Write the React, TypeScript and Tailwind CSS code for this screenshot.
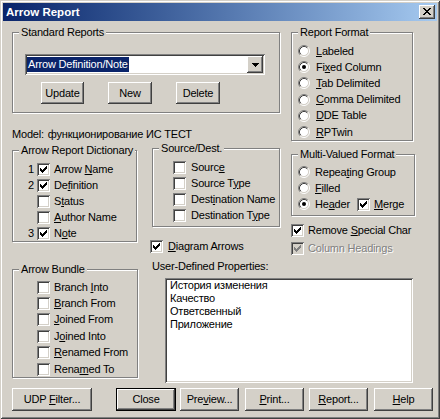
import type { ReactNode } from "react";

// win2k-ish bevels
const RAISED = "shadow-[inset_-1px_-1px_0_#404040,inset_1px_1px_0_#ffffff,inset_-2px_-2px_0_#808080]";
const SUNKEN = "shadow-[inset_1px_1px_0_#808080,inset_-1px_-1px_0_#ffffff,inset_2px_2px_0_#404040,inset_-2px_-2px_0_#d4d0c8]";

// "Fi&xed" -> Fi<u>x</u>ed
function Mn({ t }: { t: string }) {
  const i = t.indexOf("&");
  if (i < 0) return <>{t}</>;
  return (
    <>
      {t.slice(0, i)}
      <span className="underline underline-offset-[1px]">{t[i + 1]}</span>
      {t.slice(i + 2)}
    </>
  );
}

function Group({ title, className, children }: { title: string; className: string; children?: ReactNode }) {
  return (
    <div className={`relative border border-[#808080] shadow-[inset_1px_1px_0_#ffffff,1px_1px_0_#ffffff] ${className}`}>
      <span className="absolute -top-[7px] left-[6px] bg-[#d4d0c8] px-[2px] leading-[13px] whitespace-nowrap">{title}</span>
      {children}
    </div>
  );
}

function Check({ on, disabled }: { on?: boolean; disabled?: boolean }) {
  return (
    <div className={`w-[13px] h-[13px] shrink-0 ${SUNKEN} ${disabled ? "bg-[#d4d0c8]" : "bg-white"}`}>
      {on && (
        <svg width="13" height="13" viewBox="0 0 13 13" shapeRendering="crispEdges">
          <path
            fill={disabled ? "#808080" : "#000"}
            d="M3 5h1v3H3z M4 6h1v3H4z M5 7h1v3H5z M6 6h1v3H6z M7 5h1v3H7z M8 4h1v3H8z M9 3h1v3H9z"
          />
        </svg>
      )}
    </div>
  );
}

function Radio({ on }: { on?: boolean }) {
  return (
    <svg width="12" height="12" viewBox="0 0 12 12" className="shrink-0">
      <circle cx="6" cy="6" r="4.5" fill="#fff" />
      <path d="M2.11 9.89A5.5 5.5 0 0 1 9.89 2.11" stroke="#808080" fill="none" />
      <path d="M9.89 2.11A5.5 5.5 0 0 1 2.11 9.89" stroke="#ffffff" fill="none" />
      <path d="M2.82 9.18A4.5 4.5 0 0 1 9.18 2.82" stroke="#404040" fill="none" />
      <path d="M9.18 2.82A4.5 4.5 0 0 1 2.82 9.18" stroke="#d4d0c8" fill="none" />
      {on && <circle cx="6" cy="6" r="2" fill="#000" />}
    </svg>
  );
}

function Btn({ label, className, isDefault }: { label: string; className: string; isDefault?: boolean }) {
  return (
    <div className={`flex items-center justify-center bg-[#d4d0c8] ${RAISED} ${isDefault ? "border border-black" : ""} ${className}`}>
      <span className="whitespace-pre"><Mn t={label} /></span>
    </div>
  );
}

const FORMATS = ["&Labeled", "Fi&xed Column", "&Tab Delimited", "&Comma Delimited", "&DDE Table", "&RPTwin"];
const DICT: [string, string, boolean][] = [
  ["1", "Arrow &Name", true],
  ["2", "De&finition", true],
  ["", "S&tatus", false],
  ["", "&Author Name", false],
  ["3", "N&ote", true],
];
const SRC = ["Sourc&e", "Source T&ype", "Dest&ination Name", "Destination T&ype"];
const BUNDLE = ["Branch &Into", "&Branch From", "&Joined From", "J&oined Into", "&Renamed From", "Rena&med To"];
const UDP = ["История изменения", "Качество", "Ответсвенный", "Приложение"];

export default function App() {
  return (
    <div className={`w-[440px] h-[419px] bg-[#d4d0c8] p-[3px] text-[11px] leading-[13px] tracking-[-0.2px] text-black font-['Liberation_Sans',Arial,sans-serif] shadow-[inset_1px_1px_0_#d4d0c8,inset_-1px_-1px_0_#404040,inset_2px_2px_0_#ffffff,inset_-2px_-2px_0_#808080]`}>
      {/* Title bar */}
      <div className="h-[18px] flex items-center pl-[3px] pr-[2px] bg-linear-to-r from-[#0a246a] to-[#a6caf0]">
        <span className="text-white font-bold text-[11.5px] tracking-normal">Arrow Report</span>
        <div className={`ml-auto w-[16px] h-[14px] bg-[#d4d0c8] ${RAISED} flex items-start justify-start`}>
          <svg width="16" height="14" viewBox="0 0 16 14" shapeRendering="crispEdges">
            <path
              fill="#000"
              d="M4 3h2v1H4z M10 3h2v1h-2z M5 4h2v1H5z M9 4h2v1H9z M6 5h4v1H6z M7 6h2v1H7z M6 7h4v1H6z M5 8h2v1H5z M9 8h2v1H9z M4 9h2v1H4z M10 9h2v1h-2z"
            />
          </svg>
        </div>
      </div>

      {/* Upper area */}
      <div className="flex h-[235px] pl-[9px]">
        <div className="w-[268px] flex flex-col">
          <Group title="Standard Reports" className="mt-[11px] w-[268px] h-[81px] pl-[12px] pt-[21px]">
            <div className={`w-[240px] h-[21px] bg-white ${SUNKEN} flex items-center pl-[2px] pr-[2px]`}>
              <span className="h-[15px] px-[1px] bg-[#0a246a] text-white flex items-center">Arrow Definition/Note</span>
              <div className={`ml-auto w-[16px] h-[17px] bg-[#d4d0c8] ${RAISED} flex items-center justify-center`}>
                <svg width="7" height="4" viewBox="0 0 7 4" shapeRendering="crispEdges">
                  <path fill="#000" d="M0 0h7v1H0z M1 1h5v1H1z M2 2h3v1H2z M3 3h1v1H3z" />
                </svg>
              </div>
            </div>
            <div className="flex mt-[7px]">
              <Btn label="Update" className="ml-[16px] w-[43px] h-[22px]" />
              <Btn label="New" className="ml-[24px] w-[44px] h-[22px]" />
              <Btn label="Delete" className="ml-[24px] w-[44px] h-[22px]" />
            </div>
          </Group>

          <div className="mt-[15px] h-[13px] whitespace-nowrap">
            Model:<span className="ml-[4px]">функционирование ИС ТЕСТ</span>
          </div>

          <div className="flex items-start">
            <Group title="Arrow Report Dictionary" className="mt-[9px] w-[125px] h-[92px] pt-[10px]">
              {DICT.map(([n, label, on]) => (
                <div key={label} className="h-[16px] flex items-center pl-[12px]">
                  <span className="w-[10px] text-right pr-[1px]">{n}</span>
                  <div className="ml-[2px]"><Check on={on} /></div>
                  <span className="ml-[4px] whitespace-nowrap"><Mn t={label} /></span>
                </div>
              ))}
            </Group>
            <div className="ml-[15px] w-[128px] flex flex-col">
              <Group title="Source/Dest." className="mt-[7px] w-[128px] h-[79px] pt-[10px]">
                {SRC.map((label) => (
                  <div key={label} className="h-[16px] flex items-center pl-[20px]">
                    <Check />
                    <span className="ml-[5px] whitespace-nowrap"><Mn t={label} /></span>
                  </div>
                ))}
              </Group>
              <div className="mt-[11px] -ml-[2px] h-[16px] flex items-center">
                <Check on />
                <span className="ml-[5px]"><Mn t="&Diagram Arrows" /></span>
              </div>
            </div>
          </div>
        </div>

        <div className="ml-[11px] w-[124px] flex flex-col">
          <Group title="Report Format" className="mt-[11px] w-[122px] h-[109px] pt-[10px]">
            {FORMATS.map((label, i) => (
              <div key={label} className="h-[16.2px] flex items-center pl-[6px]">
                <Radio on={i === 1} />
                <span className="ml-[6px] whitespace-nowrap"><Mn t={label} /></span>
              </div>
            ))}
          </Group>
          <Group title="Multi-Valued Format" className="mt-[13px] w-[124px] h-[62px] pt-[9px]">
            <div className="h-[16px] flex items-center pl-[6px]">
              <Radio />
              <span className="ml-[5px] whitespace-nowrap"><Mn t="Repea&ting Group" /></span>
            </div>
            <div className="h-[16px] flex items-center pl-[6px]">
              <Radio />
              <span className="ml-[5px]"><Mn t="&Filled" /></span>
            </div>
            <div className="h-[16px] flex items-center pl-[6px]">
              <Radio on />
              <span className="ml-[5px] w-[42px]"><Mn t="He&ader" /></span>
              <Check on />
              <span className="ml-[4px]"><Mn t="&Merge" /></span>
            </div>
          </Group>
          <div className="mt-[6px] h-[16px] flex items-center">
            <Check on />
            <span className="ml-[4px] whitespace-nowrap"><Mn t="Remove &Special Char" /></span>
          </div>
          <div className="mt-[2px] h-[16px] flex items-center">
            <Check on disabled />
            <span className="ml-[4px] whitespace-nowrap text-[#808080] [text-shadow:1px_1px_0_#ffffff]">Column Headings</span>
          </div>
        </div>
      </div>

      {/* Lower area */}
      <div className="flex h-[132px] pl-[9px]">
        <Group title="Arrow Bundle" className="mt-[13px] w-[126px] h-[109px] pt-[9px]">
          {BUNDLE.map((label) => (
            <div key={label} className="h-[16.4px] flex items-center pl-[24px]">
              <Check />
              <span className="ml-[4px] whitespace-nowrap"><Mn t={label} /></span>
            </div>
          ))}
        </Group>
        <div className="ml-[14px] w-[262px] flex flex-col">
          <div className="mt-[4px] h-[13px]">User-Defined Properties:</div>
          <div className={`mt-[5px] ml-[13px] w-[248px] h-[105px] bg-white ${SUNKEN} pl-[5px] pt-[1px]`}>
            {UDP.map((t) => (
              <div key={t} className="h-[13px] leading-[13px]">{t}</div>
            ))}
          </div>
        </div>
      </div>

      {/* Buttons */}
      <div className="flex h-[23px] pl-[9px]">
        <Btn label="UDP &Filter..." className="w-[80px] h-[23px]" />
        <Btn label="Close" isDefault className="ml-[24px] w-[60px] h-[23px]" />
        <Btn label="Pre&view..." className="ml-[4px] w-[59px] h-[23px]" />
        <Btn label="&Print..." className="ml-[6px] w-[59px] h-[23px]" />
        <Btn label="&Report..." className="ml-[5px] w-[59px] h-[23px]" />
        <Btn label="&Help" className="ml-[6px] w-[59px] h-[23px]" />
      </div>
    </div>
  );
}
